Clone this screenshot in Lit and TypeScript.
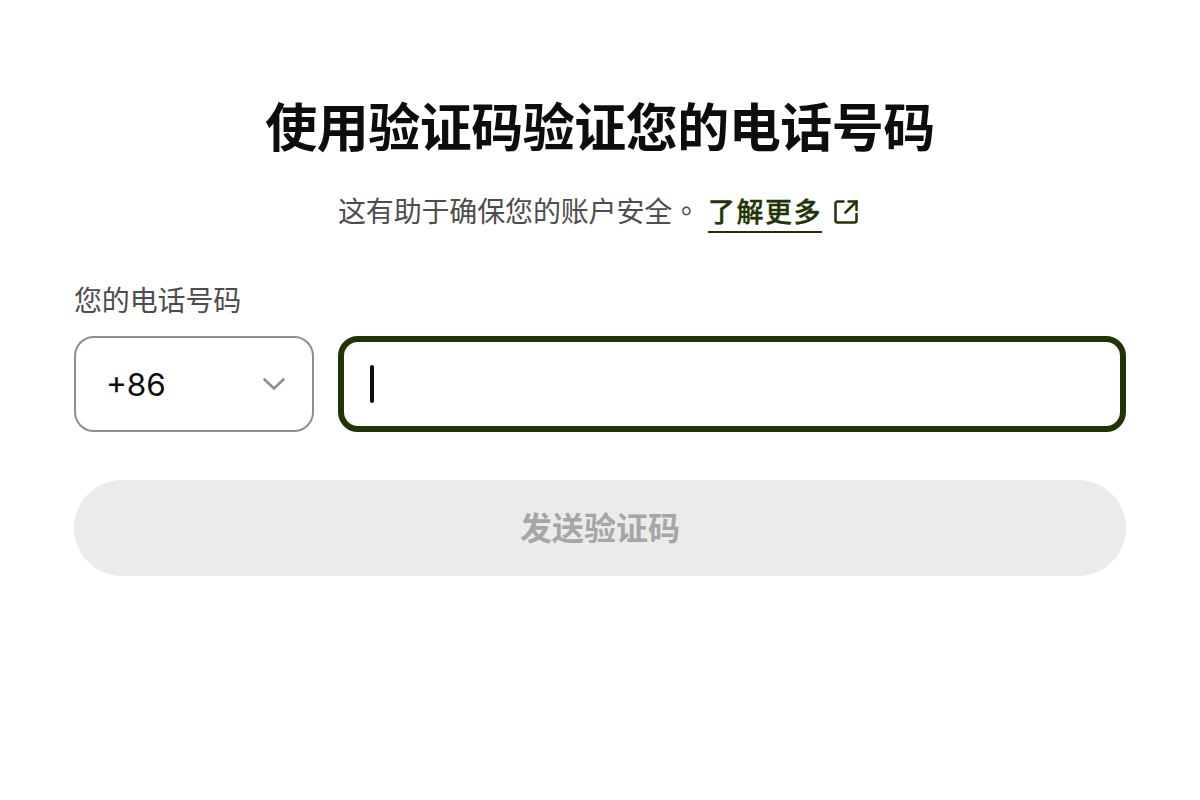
import { LitElement, html, css } from "lit";
import { customElement } from "lit/decorators.js";

@customElement("app-root")
export class AppRoot extends LitElement {
  static styles = css`
    :host { display: block; width: 1200px; height: 800px; background: #fff; font-family: "Inter", "Noto Sans CJK SC", sans-serif; }
    .wrap { display: flex; flex-direction: column; padding: 97px 74px 0; box-sizing: border-box; height: 800px; }
    h1 { margin: 0; text-align: center; font-size: 52px; line-height: 64px; font-weight: 700; letter-spacing: -0.5px; color: #0d0d0d; }
    .sub { display: flex; justify-content: center; align-items: center; margin-top: 27px; padding-right: 4px; height: 48px; font-size: 28px; color: #4d4d4d; }
    .lead { margin-bottom: 4px; letter-spacing: -0.15px; }
    .dot { font-family: "Noto Sans CJK TC", sans-serif; }
    .link { color: #1f3506; font-size: 27px; font-weight: 500; -webkit-text-stroke: 0.35px #1f3506; border-bottom: 2px solid #1f3506; line-height: 36px; margin: 4px 0 0 8px; letter-spacing: 1.5px; }
    .ext { margin-left: 12px; width: 24px; height: 24px; display: block; }
    .label { margin-top: 45px; font-size: 28px; line-height: 40px; letter-spacing: -0.15px; color: #4d4d4d; }
    .row { display: flex; gap: 24px; margin-top: 15px; }
    .cc { width: 240px; height: 96px; box-sizing: border-box; border: 2px solid #8f8f8f; border-radius: 20px; display: flex; align-items: center; justify-content: space-between; padding: 0 27px 0 30px; font-size: 31.5px; color: #0d0d0d; }
    .chev { display: block; width: 22px; height: 12px; }
    .phone { flex: 1; height: 96px; box-sizing: border-box; border: 6px solid #1f3506; border-radius: 20px; display: flex; align-items: center; padding-left: 26px; }
    .caret { width: 4px; height: 38px; border-radius: 2px; background: #0d0d0d; }
    .btn { margin-top: 48px; height: 96px; box-sizing: border-box; padding-bottom: 4px; border-radius: 48px; background: #ebebeb; color: #a6a6a6; font-size: 32px; font-weight: 600; display: flex; align-items: center; justify-content: center; }
  `;
  render() {
    return html`<div class="wrap">
      <h1>使用验证码验证您的电话号码</h1>
      <div class="sub"><span class="lead">这有助于确保您的账户安全<span class="dot">。</span></span><span class="link">了解更多</span>
        <svg class="ext" viewBox="0 0 24 24" fill="none" stroke="#1f3506" stroke-width="2.5" stroke-linecap="round" stroke-linejoin="round"><path d="M9.5 1.5H3.5a2 2 0 0 0-2 2v17a2 2 0 0 0 2 2h17a2 2 0 0 0 2-2V14"/><path d="M14.5 1.5h8v8.5"/><path d="M22.5 1.5 11.5 12.5"/></svg>
      </div>
      <div class="label">您的电话号码</div>
      <div class="row">
        <div class="cc"><span>+86</span><svg class="chev" viewBox="0 0 22 12" fill="none" stroke="#8f8f8f" stroke-width="2.6" stroke-linecap="round" stroke-linejoin="round"><path d="M1.5 1.5 11 10.5l9.5-9"/></svg></div>
        <div class="phone"><div class="caret"></div></div>
      </div>
      <div class="btn">发送验证码</div>
    </div>`;
  }
}
